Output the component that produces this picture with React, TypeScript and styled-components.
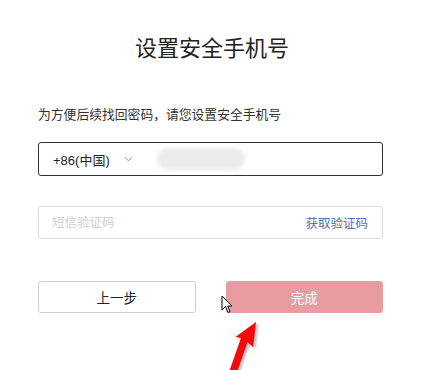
import React from "react"
import styled, { createGlobalStyle } from "styled-components"

const GlobalStyle = createGlobalStyle`
    html, body {
        margin: 0;
        padding: 0;
        background: #ffffff;
    }
    body {
        font-family: "Liberation Sans", "Noto Sans CJK SC", sans-serif;
        color: #333333;
    }
`

const BindPhone = () => {
    return (
        <Page>
            <GlobalStyle />
            <Title>设置安全手机号</Title>
            <Tip>为方便后续找回密码，请您设置安全手机号</Tip>
            <PhoneBox>
                <AreaCode>+86(中国)</AreaCode>
                <Chevron viewBox="0 0 10 6">
                    <path d="M1 1 L5 5 L9 1" fill="none" stroke="#888" strokeWidth="1" />
                </Chevron>
                <BlurredNumber />
            </PhoneBox>
            <CodeBox>
                <CodeInput placeholder="短信验证码" />
                <GetCode>获取验证码</GetCode>
            </CodeBox>
            <Buttons>
                <Button>上一步</Button>
                <Button primary>完成</Button>
            </Buttons>
            <Cursor viewBox="0 0 12 19">
                <path d="M1 1 L1 15 L4.5 11.5 L7 17.5 L9 16.6 L6.6 11 L11 11 Z" fill="#fff" stroke="#000" strokeWidth="1" />
            </Cursor>
            <Arrow viewBox="0 0 44 60">
                <defs>
                    <filter id="sh" x="-50%" y="-50%" width="200%" height="200%">
                        <feGaussianBlur stdDeviation="1.6" />
                    </filter>
                </defs>
                <path d="M36 7 L33 32 L27.5 27 L16 60 L8 60 L21 23 L15.5 22 Z" fill="#666" opacity="0.55" filter="url(#sh)" transform="translate(2 1.5)" />
                <path d="M36 7 L33 32 L27.5 27 L16 60 L8 60 L21 23 L15.5 22 Z" fill="#f50808" />
            </Arrow>
        </Page>
    )
}

const Page = styled.div`
    position: relative;
    width: 432px;
    height: 370px;
    overflow: hidden;
    padding: 0 49px 0 38px;
    box-sizing: border-box;
    display: flex;
    flex-direction: column;
`
const Title = styled.h1`
    margin: 36px 0 0 0;
    font-size: 22px;
    font-weight: normal;
    line-height: 26px;
    text-align: center;
    color: #222;
    padding-left: 3px;
`
const Tip = styled.p`
    margin: 45px 0 0 0;
    font-size: 12.8px;
    line-height: 16px;
    color: #333;
`
const PhoneBox = styled.div`
    display: flex;
    align-items: center;
    margin-top: 19px;
    height: 34px;
    border: 1px solid #333;
    border-radius: 3px;
    box-sizing: border-box;
    padding-left: 14px;
`
const AreaCode = styled.span`
    font-size: 13px;
    color: #222;
`
const Chevron = styled.svg`
    width: 9px;
    height: 6px;
    margin-left: 14px;
`
const BlurredNumber = styled.div`
    width: 88px;
    height: 22px;
    margin-left: 24px;
    border-radius: 12px;
    background: #ebebeb;
    filter: blur(2px);
`
const CodeBox = styled.div`
    display: flex;
    align-items: center;
    margin-top: 30px;
    height: 33px;
    border: 1px solid #dcdcdc;
    border-radius: 3px;
    box-sizing: border-box;
    padding: 0 14px 0 13px;
`
const CodeInput = styled.input`
    flex: 1;
    border: none;
    outline: none;
    padding: 0;
    font-family: inherit;
    font-size: 12.5px;
    background: transparent;
    &::placeholder {
        color: #cfcfcf;
    }
`
const GetCode = styled.span`
    font-size: 12.5px;
    color: #5b6fa8;
`
const Buttons = styled.div`
    display: grid;
    grid-template-columns: 1fr 1fr;
    gap: 30px;
    margin-top: 42px;
`
const Button = styled.button<{ primary?: boolean }>`
    height: 32px;
    border-radius: 3px;
    font-family: inherit;
    font-size: 13.5px;
    border: 1px solid ${p => (p.primary ? "#e89ca2" : "#d0d0d0")};
    background: ${p => (p.primary ? "#e89ca2" : "#ffffff")};
    color: ${p => (p.primary ? "#ffffff" : "#222")};
`
const Cursor = styled.svg`
    position: absolute;
    left: 221px;
    top: 295px;
    width: 12px;
    height: 19px;
`
const Arrow = styled.svg`
    position: absolute;
    left: 220px;
    top: 315px;
    width: 44px;
    height: 60px;
`

export default BindPhone
